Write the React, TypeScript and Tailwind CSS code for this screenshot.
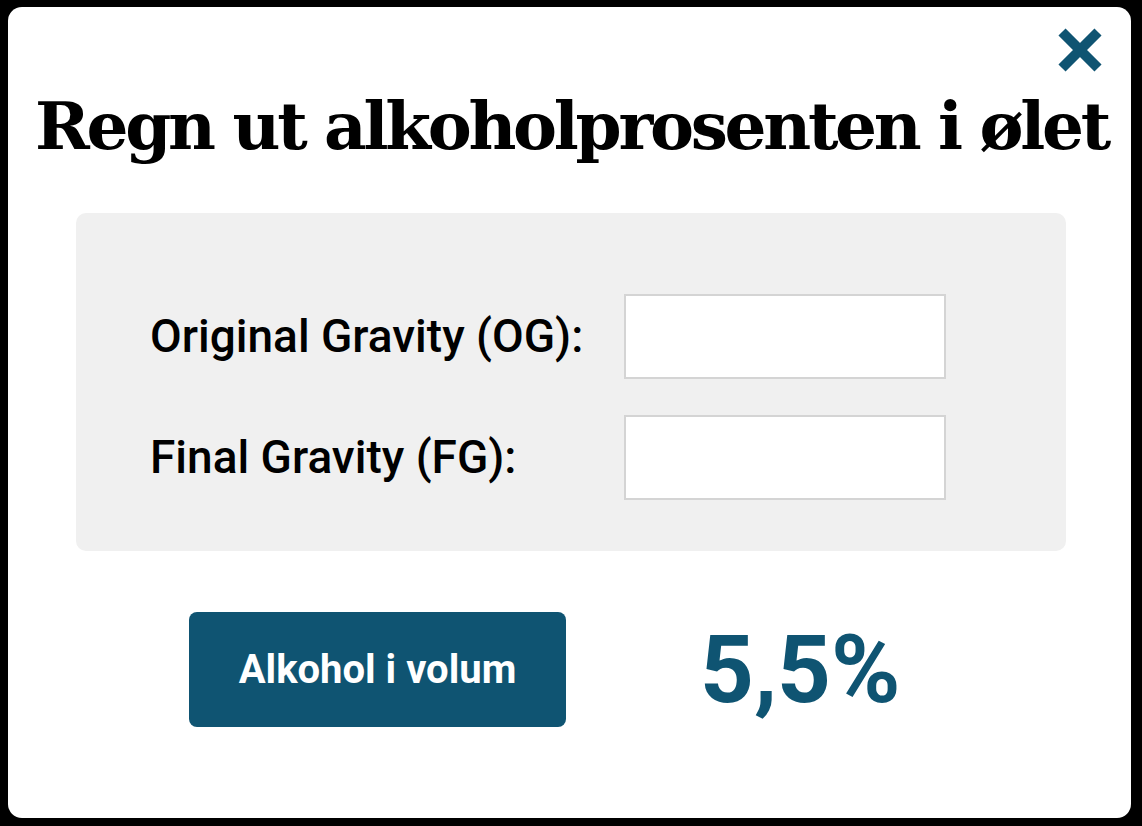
import React from "react";

export default function App() {
  return (
    <div className="w-[1142px] h-[826px] bg-black pt-[7px] pl-[8px] overflow-hidden">
      <div
        className="relative w-[1123px] h-[811px] bg-white rounded-[14px]"
        style={{ fontFamily: "Roboto, 'Liberation Sans', sans-serif" }}
      >
        {/* close */}
        <button className="absolute top-[20px] right-[28px] w-[46px] h-[46px]" aria-label="Lukk">
          <svg viewBox="0 0 46 46" className="w-[46px] h-[46px]">
            <path d="M5 5 L41 41 M41 5 L5 41" stroke="#0f5472" strokeWidth="10" strokeLinecap="butt" />
          </svg>
        </button>

        <h1
          className="pt-[81px] pl-[4px] text-center whitespace-nowrap text-[66px] leading-[76px] tracking-[-3.3px] font-bold text-black"
          style={{ fontFamily: "'DejaVu Serif', 'Liberation Serif', serif" }}
        >
          Regn ut alkoholprosenten i ølet
        </h1>

        {/* form panel */}
        <div className="mt-[49px] ml-[68px] w-[990px] h-[338px] bg-[#f0f0f0] rounded-[10px] pt-[81px] pl-[74px]">
          <div className="flex flex-col gap-[36px]">
            <div className="flex items-center">
              <label className="w-[474px] text-[46px] font-medium text-black">Original Gravity (OG):</label>
              <input className="w-[322px] h-[85px] bg-white border-2 border-[#d4d4d4]" />
            </div>
            <div className="flex items-center">
              <label className="w-[474px] text-[46px] font-medium text-black">Final Gravity (FG):</label>
              <input className="w-[322px] h-[85px] bg-white border-2 border-[#d4d4d4]" />
            </div>
          </div>
        </div>

        {/* result */}
        <div className="mt-[61px] ml-[181px] flex items-center gap-[134px]">
          <button className="w-[377px] h-[115px] bg-[#0f5472] rounded-[8px] text-white text-[40px] font-bold">
            Alkohol i volum
          </button>
          <span className="text-[94px] leading-none font-bold text-[#0f5472]">5,5%</span>
        </div>
      </div>
    </div>
  );
}
